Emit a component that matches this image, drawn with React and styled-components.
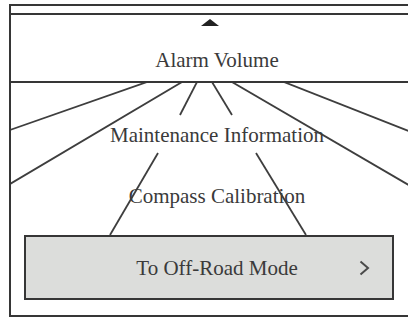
import React from 'react';
import styled, { createGlobalStyle } from 'styled-components';

const Global = createGlobalStyle`
  html, body {
    margin: 0;
    padding: 0;
    background: #fff;
  }
  body {
    font-family: "Liberation Serif", "Times New Roman", serif;
    color: #3a3a3a;
  }
`;

const Panel = styled.div`
  margin: 4px 0 0 9px;
  width: 399px;
  box-sizing: border-box;
  border-left: 2px solid #363636;
  border-top: 2px solid #363636;
  display: flex;
  flex-direction: column;
`;

const Strip = styled.div`
  height: 7px;
  border-bottom: 2px solid #363636;
`;

const Title = styled.div`
  height: 68px;
  box-sizing: border-box;
  padding-top: 4px;
  border-bottom: 2px solid #363636;
  display: flex;
  flex-direction: column;
  align-items: center;
`;

const UpArrow = styled.div`
  width: 0;
  height: 0;
  border-left: 9px solid transparent;
  border-right: 9px solid transparent;
  border-bottom: 7px solid #222;
`;

const Item = styled.div`
  align-self: stretch;
  padding-left: 15px;
  font-size: 21px;
  line-height: 24px;
  text-align: center;
  margin-top: ${p => p.$gap}px;
  position: relative;
  white-space: nowrap;
`;

const Body = styled.div`
  position: relative;
  height: 234px;
  box-sizing: border-box;
  padding-top: 40px;
  border-bottom: 2px solid #363636;
  display: flex;
  flex-direction: column;
`;

const Rays = styled.svg`
  position: absolute;
  top: 0;
  left: 0;
  width: 397px;
  height: 234px;
`;

const Button = styled.div`
  position: relative;
  margin: 27px 0 0 13px;
  width: 370px;
  height: 65px;
  box-sizing: border-box;
  border: 2px solid #363636;
  background: #dcdddb;
  display: flex;
  align-items: center;
`;

const Label = styled.span`
  flex: 1;
  padding-left: 50px;
  text-align: center;
  font-size: 21px;
  line-height: 24px;
`;

const Chevron = styled.svg`
  width: 12px;
  height: 16px;
  margin-right: 22px;
`;

const rays = [
  [147, 84, 10, 132],
  [182, 84, 10, 186],
  [197, 84, 180, 117],
  [158, 155, 110, 237],
  [212, 84, 232, 117],
  [256, 155, 306, 237],
  [232, 84, 424, 196],
  [284, 84, 424, 139],
];

export default function App() {
  return (
    <>
      <Global />
      <Panel>
        <Strip />
        <Title>
          <UpArrow />
          <Item $gap={22}>Alarm Volume</Item>
        </Title>
        <Body>
          <Rays viewBox="11 85 397 234">
            {rays.map(([x1, y1, x2, y2], i) => (
              <line key={i} x1={x1} y1={y1} x2={x2} y2={y2} stroke="#3e3e3e" strokeWidth="1.8" />
            ))}
          </Rays>
          <Item $gap={0}>Maintenance Information</Item>
          <Item $gap={37}>Compass Calibration</Item>
          <Button>
            <Label>To Off-Road Mode</Label>
            <Chevron viewBox="0 0 12 16">
              <polyline points="2.5,1.5 10,8 2.5,14.5" fill="none" stroke="#4a4a4a" strokeWidth="2" />
            </Chevron>
          </Button>
        </Body>
      </Panel>
    </>
  );
}
